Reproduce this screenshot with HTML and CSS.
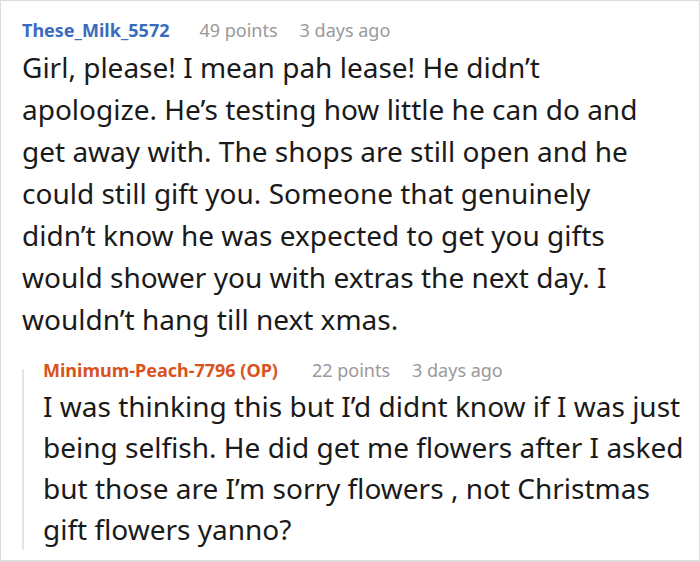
FILE: index.html
```html
<!DOCTYPE html>
<html>
<head>
<meta charset="utf-8">
<link rel="stylesheet" href="styles.css">
</head>
<body>
<div class="frame">
  <div class="comment">
    <div class="meta">
      <span class="user">These_Milk_5572</span>
      <span class="info points">49 points</span>
      <span class="info">3 days ago</span>
    </div>
    <p class="text main-text">Girl, please! I mean pah lease! He didn’t apologize. He’s testing how little he can do and get away with. The shops are still open and he could still gift you. Someone that genuinely didn’t know he was expected to get you gifts would shower you with extras the next day. I wouldn’t hang till next xmas.</p>
    <div class="reply">
      <div class="meta">
        <span class="user op">Minimum-Peach-7796 (OP)</span>
        <span class="info points">22 points</span>
        <span class="info">3 days ago</span>
      </div>
      <p class="text">I was thinking this but I’d didnt know if I was just being selfish. He did get me flowers after I asked but those are I’m sorry flowers , not Christmas gift flowers yanno?</p>
    </div>
  </div>
</div>
</body>
</html>
```
FILE: styles.css
```css
html, body {
  margin: 0;
  padding: 0;
  background: #fff;
}
.frame {
  width: 700px;
  height: 562px;
  box-sizing: border-box;
  border: 1px solid #dcdcdc;
  border-bottom-width: 2px;
  font-family: "Noto Sans", sans-serif;
  color: #1a1a1a;
  overflow: hidden;
}
.comment {
  padding: 17px 8px 0 21px;
}
.meta {
  display: flex;
  align-items: baseline;
  font-size: 18px;
  line-height: 24px;
}
.user {
  font-weight: 700;
  color: #3a6bbd;
  margin-right: 30px;
}
.user.op {
  color: #d9531e;
  margin-right: 34px;
}
.info {
  color: #999;
}
.points {
  margin-right: 22px;
}
.text {
  margin: 4px 0 0;
  font-size: 28px;
  line-height: 42px;
  color: #1a1a1a;
}
.main-text {
  max-width: 632px;
}
.reply {
  display: flow-root;
  margin-top: 29px;
  border-left: 2px solid #e4e4e4;
  padding-left: 19px;
}
.reply .meta {
  margin-top: -11px;
}
.reply .text {
  line-height: 41px;
}
```
